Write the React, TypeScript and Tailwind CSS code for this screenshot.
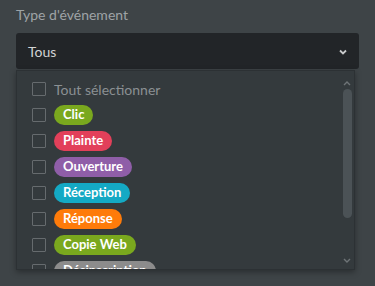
import React from "react";

const items = [
  { label: "Clic", color: "bg-[#7aa81e]" },
  { label: "Plainte", color: "bg-[#e2405a]" },
  { label: "Ouverture", color: "bg-[#8f5ea8]" },
  { label: "Réception", color: "bg-[#14a9c4]" },
  { label: "Réponse", color: "bg-[#fe7b0a]" },
  { label: "Copie Web", color: "bg-[#7aa81e]" },
  { label: "Désinscription", color: "bg-[#8c8c8c]" },
];

export default function App() {
  return (
    <div className="w-[375px] h-[286px] bg-[#3e4447] overflow-hidden px-4 pt-[6px]" style={{ fontFamily: "Lato, 'Open Sans', sans-serif" }}>
      <div className="text-[14px] leading-[18px] text-[#9ea3a6]">Type d'événement</div>
      <div className="mt-[9px] h-[36px] rounded-[3px] bg-[#222528] flex items-center justify-between pl-3 pr-[12px]">
        <span className="text-[14px] text-[#d2d4d5]">Tous</span>
        <svg width="8" height="6" viewBox="0 0 8 6" className="mt-[1px]">
          <path d="M1 1.5 L4 4.5 L7 1.5" stroke="#c8cacb" strokeWidth="1.8" fill="none" />
        </svg>
      </div>
      <div className="mt-[1px] h-[200px] w-[339px] bg-[#343a3d] border border-[#2c3134] shadow-[0_2px_6px_rgba(0,0,0,0.35)] flex overflow-hidden">
        <div className="flex-1 pt-[5px] pl-[15px]">
          <div className="h-[26px] flex items-center gap-[8px]">
            <div className="w-[14px] h-[14px] border border-[#666b6e] rounded-[1px]" />
            <span className="text-[14px] text-[#8b9093]">Tout sélectionner</span>
          </div>
          {items.map((it) => (
            <div key={it.label} className="h-[26px] flex items-center gap-[8px]">
              <div className="w-[14px] h-[14px] border border-[#666b6e] rounded-[1px]" />
              <span className={`${it.color} h-[20px] rounded-full px-[9px] flex items-center text-[13px] font-bold text-white`}>
                {it.label}
              </span>
            </div>
          ))}
        </div>
        <div className="w-[10px] mr-[2px] flex flex-col items-center pt-[10px]">
          <svg width="8" height="5" viewBox="0 0 8 5">
            <path d="M1 4 L4 1 L7 4" stroke="#6e7477" strokeWidth="1.4" fill="none" />
          </svg>
          <div className="mt-[3px] w-[9px] h-[129px] rounded-full bg-[#4b5256]" />
          <div className="flex-1" />
          <svg width="8" height="5" viewBox="0 0 8 5" className="mb-[6px]">
            <path d="M1 1 L4 4 L7 1" stroke="#6e7477" strokeWidth="1.4" fill="none" />
          </svg>
        </div>
      </div>
    </div>
  );
}
